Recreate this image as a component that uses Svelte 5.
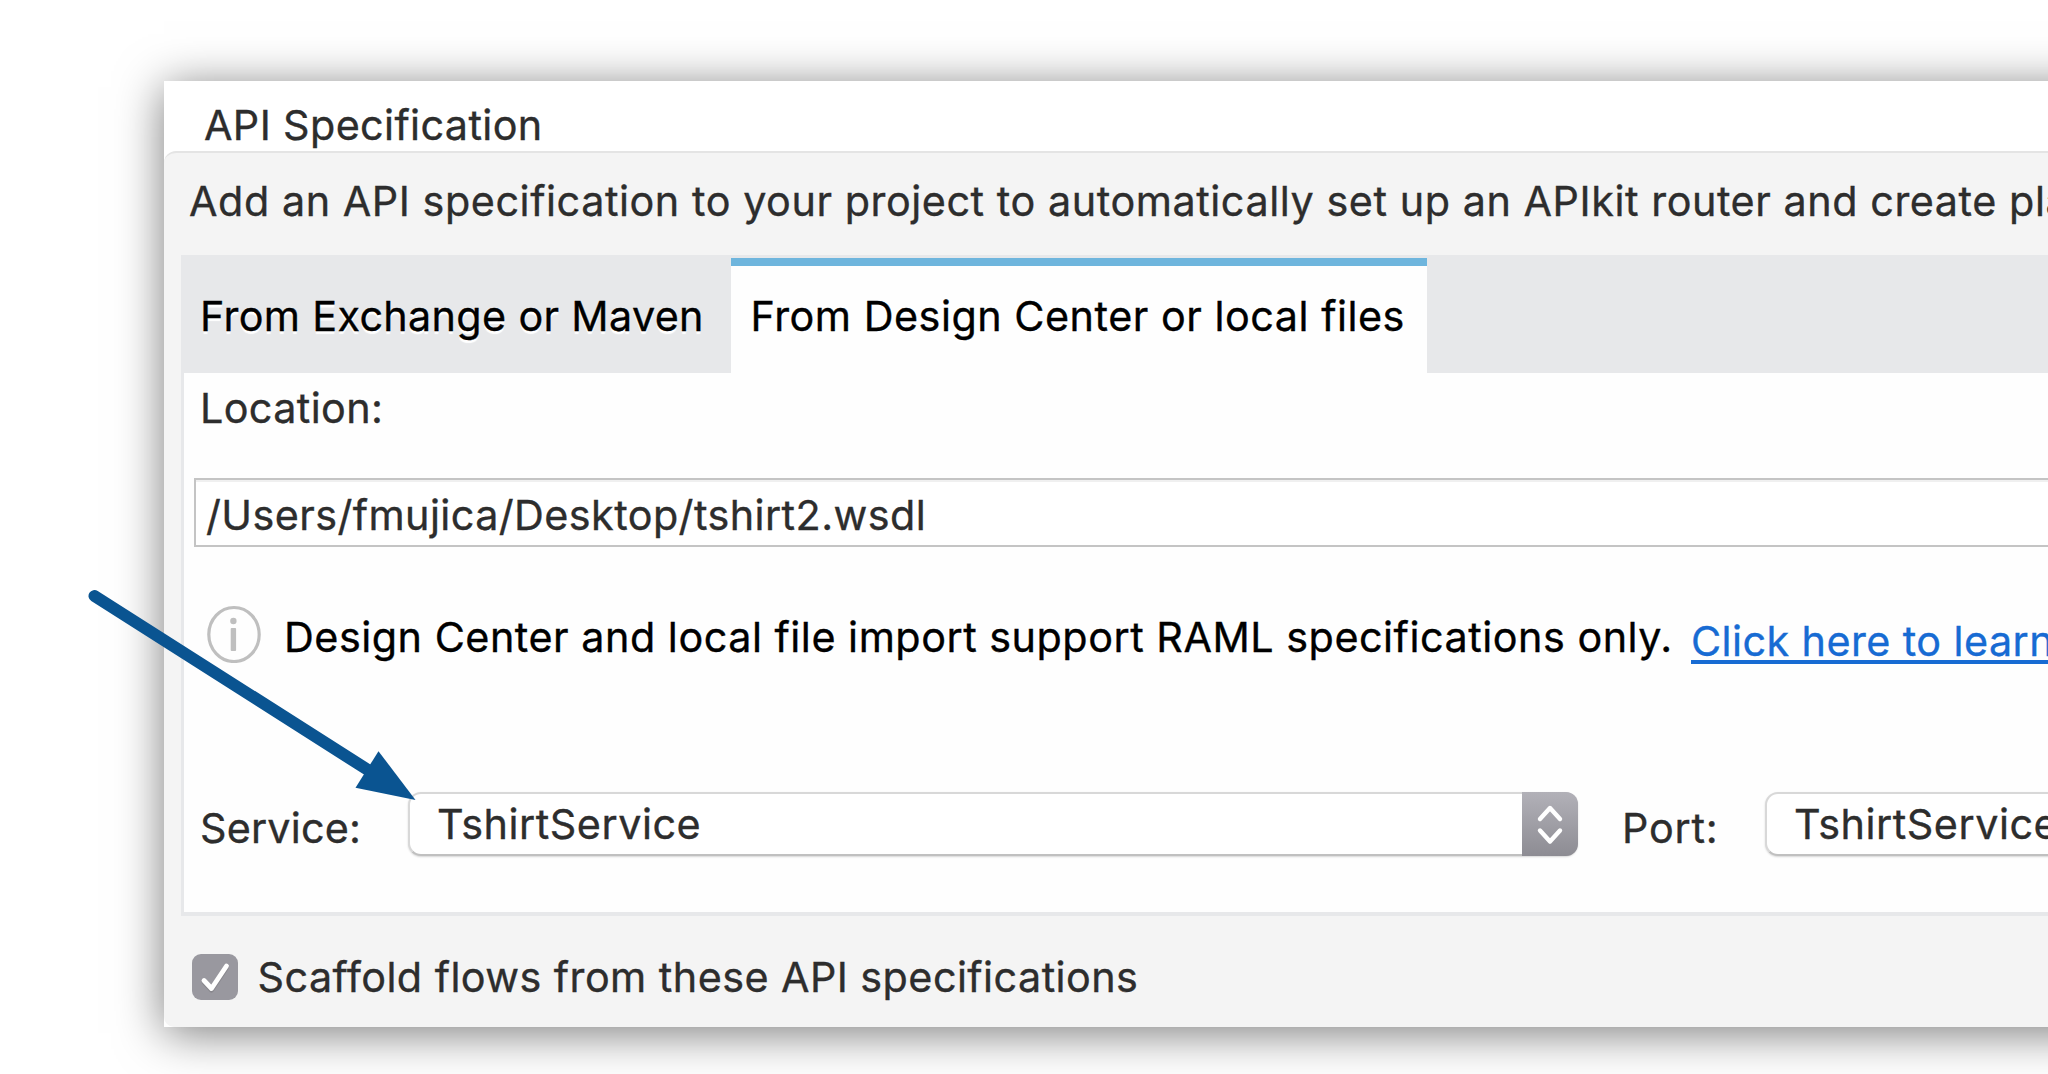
<script>
  const tabs = [
    { label: 'From Exchange or Maven', active: false },
    { label: 'From Design Center or local files', active: true }
  ];
</script>

<main class="page">
  <section class="panel">
    <h1 class="title">API Specification</h1>
    <div class="group">
      <p class="intro">Add an API specification to your project to automatically set up an APIkit router and create pla</p>
      <div class="tabbox">
        <div class="tabs">
          {#each tabs as tab}
            <div class="tab" class:active={tab.active}>{tab.label}</div>
          {/each}
        </div>
        <div class="content">
          <div class="location">Location:</div>
          <div class="input">/Users/fmujica/Desktop/tshirt2.wsdl</div>
          <div class="info">
            <svg class="info-icon" width="54" height="58" viewBox="0 0 54 58">
              <ellipse cx="27" cy="29.5" rx="25.2" ry="27" fill="none" stroke="#bfbfbf" stroke-width="3.2" />
              <circle cx="26.4" cy="16" r="3.2" fill="#bfbfbf" />
              <rect x="23.7" y="23" width="5.4" height="23" rx="1" fill="#bfbfbf" />
            </svg>
            <span class="info-text">Design Center and local file import support RAML specifications only.</span>
            <span class="link">Click here to learn</span>
          </div>
          <div class="fields">
            <span class="service">Service:</span>
            <div class="select">
              <span class="value">TshirtService</span>
              <div class="stepper">
                <svg width="30" height="42" viewBox="0 0 30 42" fill="none" stroke="#fff" stroke-width="4.4" stroke-linecap="round" stroke-linejoin="round">
                  <path d="M5 16 L15 5 L25 16" />
                  <path d="M5 27.5 L15 38.5 L25 27.5" />
                </svg>
              </div>
            </div>
            <span class="port">Port:</span>
            <div class="select">
              <span class="value">TshirtService</span>
            </div>
          </div>
        </div>
      </div>
      <div class="scaffold">
        <div class="checkbox">
          <svg width="46" height="46" viewBox="0 0 46 46" fill="none" stroke-linecap="round" stroke-linejoin="round">
            <path d="M12 28.5 L19.5 36.5 L34.5 14" stroke="#77767c" stroke-opacity=".5" stroke-width="4.4" />
            <path d="M12 26.5 L19.5 34.5 L34.5 12" stroke="#fff" stroke-width="4.8" />
          </svg>
        </div>
        <span class="scaffold-label">Scaffold flows from these API specifications</span>
      </div>
    </div>
  </section>
  <svg class="arrow" width="340" height="230" viewBox="0 0 340 230">
    <path d="M14.5 16 L288 190" stroke="#0a5491" stroke-width="12" stroke-linecap="round" />
    <polygon points="335.5,220 298.5,171.2 275.5,207.8" fill="#0a5491" />
  </svg>
</main>

<style>
  :global(body) { margin: 0; overflow: hidden; background: #fff; }
  .page {
    position: relative;
    box-sizing: border-box;
    width: 2048px;
    height: 1074px;
    padding: 81px 0 0 164px;
    overflow: hidden;
    background: #fff;
    font-family: Inter, "Liberation Sans", sans-serif;
    font-size: 41.3px;
    line-height: 50px;
    letter-spacing: .43px;
    color: #2d2d2d;
    -webkit-text-stroke: .35px currentColor;
    white-space: nowrap;
  }
  .panel {
    width: 2100px;
    height: 946px;
    background: #fff;
    box-shadow: 0 6px 44px rgba(0, 0, 0, .52);
  }
  .title { margin: 0; height: 70px; box-sizing: border-box; padding: 19px 0 0 40px; font-size: inherit; font-weight: 400; letter-spacing: .38px; }
  .group {
    box-sizing: border-box;
    height: 876px;
    border-top: 2px solid #e4e4e4;
    border-radius: 12px 0 0 10px;
    background: #f4f4f4;
  }
  .intro { margin: 0; height: 102px; box-sizing: border-box; padding: 23px 0 0 25px; letter-spacing: .56px; }
  .tabbox { box-sizing: border-box; margin-left: 17px; height: 661px; border: solid #e7e8ea; border-width: 0 0 4px 3px; background: #fefefe; }
  .tabs { display: flex; align-items: flex-end; height: 118px; margin-left: -3px; background: #e7e8ea; color: #000; }
  .tab { box-sizing: border-box; height: 118px; width: 550px; padding: 36px 0 0 19px; letter-spacing: .34px; text-shadow: 0 3px 1px #fff; }
  .tab.active { height: 115px; width: 695.5px; border-top: 8px solid #6eb5dd; padding: 25px 0 0 19.5px; background: #fefefe; letter-spacing: .52px; }
  .location { padding: 10px 0 0 16px; height: 105px; box-sizing: border-box; letter-spacing: .38px; }
  .input { box-sizing: border-box; height: 69px; margin-left: 10px; border: solid #c4c4c4; border-width: 2px 0 2px 2px; padding: 10px 0 0 10px; background: #fff; box-shadow: inset 0 2px 0 #f0f0f0; }
  .info { display: flex; margin-top: 58px; padding-left: 23px; height: 187px; box-sizing: border-box; color: #000; }
  .info-icon { flex: none; margin-right: 23px; }
  .info-text { margin-top: 7px; width: 1407px; flex: none; letter-spacing: .52px; }
  .link { flex: 1; margin-top: 11px; color: #176bd3; height: 48px; border-bottom: 4px solid #176bd3; box-sizing: border-box; }
  .fields { display: flex; }
  .service, .port { box-sizing: border-box; flex: none; padding-top: 11px; }
  .service { width: 224px; padding-left: 16px; letter-spacing: .2px; }
  .port { width: 187px; padding-left: 44px; letter-spacing: .8px; }
  .select { display: flex; justify-content: space-between; box-sizing: border-box; width: 1170px; height: 64px; flex: none; border: 2px solid #d8d8d8; border-bottom-color: #c0c0c0; border-radius: 13px; background: #fff; box-shadow: 0 1px 2px rgba(0, 0, 0, .16); }
  .value { padding: 5px 0 0 27px; letter-spacing: .54px; }
  .stepper { display: flex; align-items: center; justify-content: center; width: 56px; height: 64px; margin: -2px -2px 0 0; border-radius: 0 12px 12px 0; background: linear-gradient(#b2b1b8, #8d8c93); box-sizing: border-box; }
  .scaffold { display: flex; padding: 38px 0 0 28px; }
  .checkbox { width: 46px; height: 46px; border-radius: 9px; background: #99989f; margin-right: 19.5px; }
  .checkbox svg { display: block; }
  .scaffold-label { margin-top: -2px; letter-spacing: .45px; }
  .arrow { position: absolute; left: 80px; top: 580px; }
</style>
